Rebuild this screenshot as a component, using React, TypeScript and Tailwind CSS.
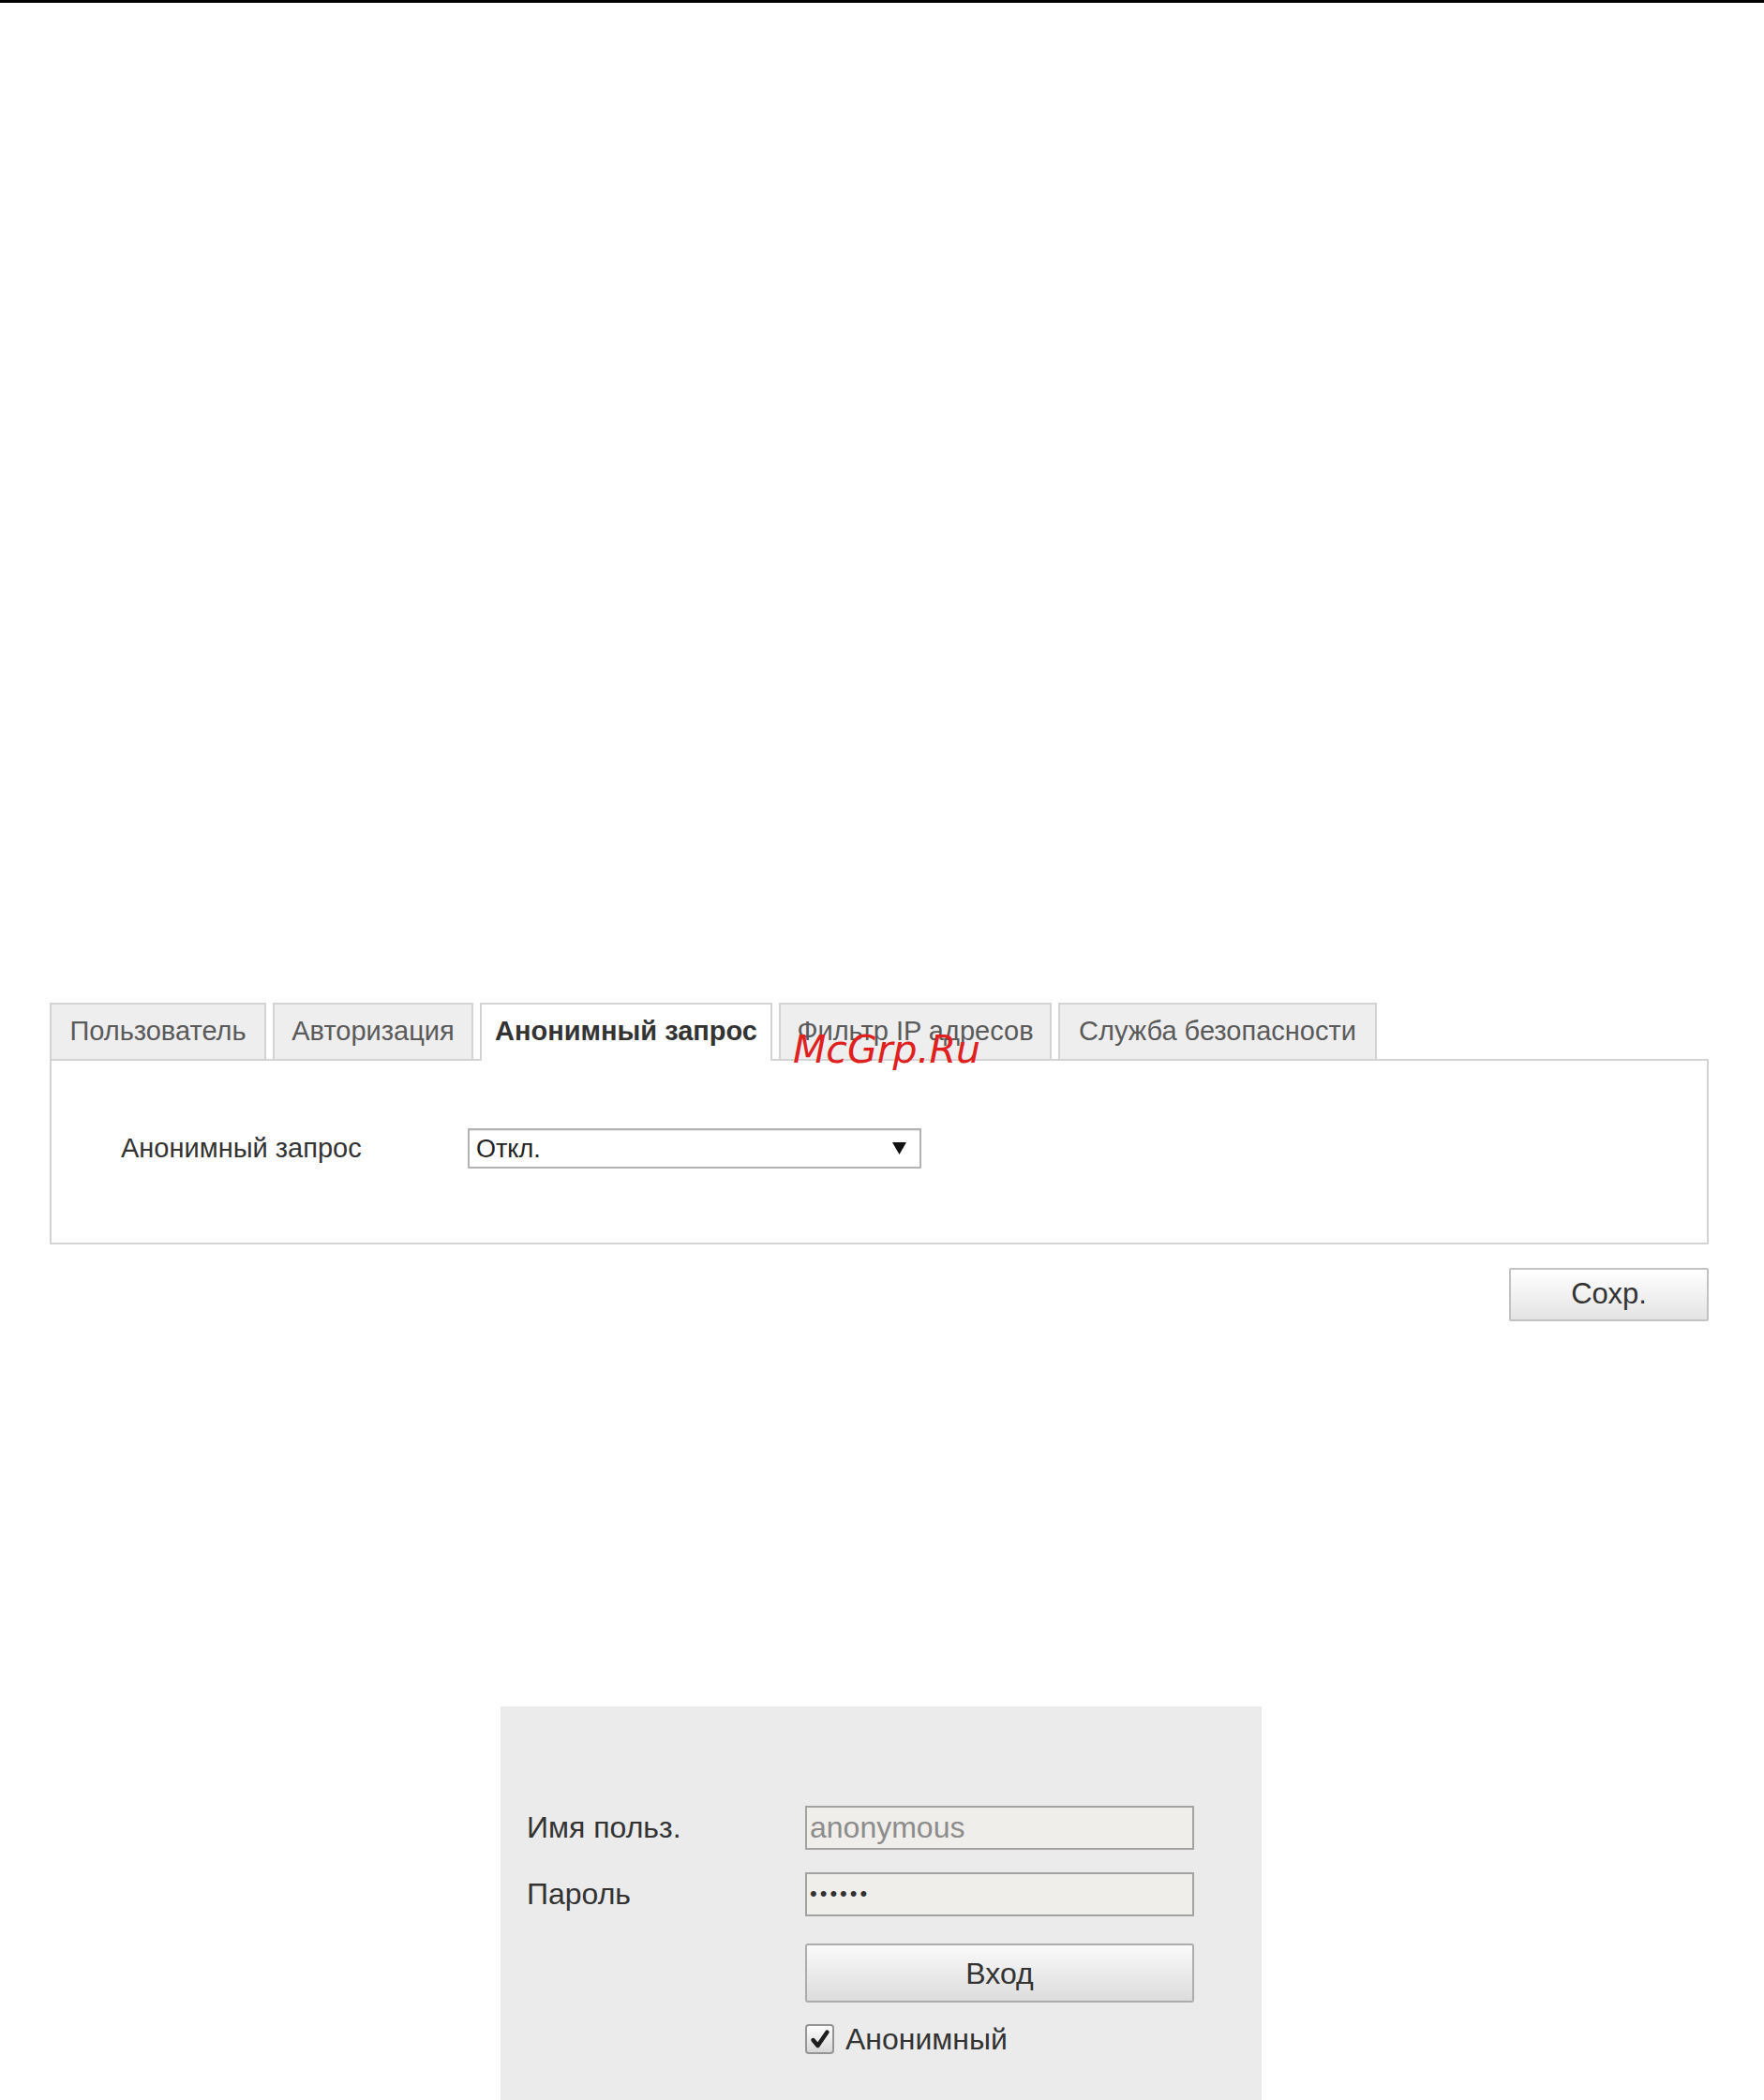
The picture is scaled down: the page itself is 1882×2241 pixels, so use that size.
const tabs = [
  { label: "Пользователь", width: "w-[231px]" },
  { label: "Авторизация", width: "w-[214px]" },
  { label: "Анонимный запрос", width: "w-[312px]", active: true },
  { label: "Фильтр IP адресов", width: "w-[291px]" },
  { label: "Служба безопасности", width: "w-[340px]" },
];

function Tabs() {
  return (
    <div className="relative z-10 -mb-[2px] flex items-start gap-[7px]">
      {tabs.map((tab) =>
        tab.active ? (
          <div
            key={tab.label}
            className={`${tab.width} flex h-[62px] items-center justify-center border-x-2 border-t-2 border-[#d3d3d3] bg-white pb-[2px] text-[29px] font-bold text-[#333]`}
          >
            {tab.label}
          </div>
        ) : (
          <div
            key={tab.label}
            className={`${tab.width} flex h-[62px] items-center justify-center border-2 border-[#d3d3d3] bg-[#eeeeee] text-[29px] text-[#5a5a5a]`}
          >
            {tab.label}
          </div>
        ),
      )}
    </div>
  );
}

function SelectBox() {
  return (
    <div className="flex h-[43px] w-[484px] items-center justify-between border-2 border-[#b4b4b4] bg-white pl-[7px] pr-[14px] shadow-[inset_0_1px_0_#e5e5e5]">
      <span className="text-[27px] text-[#222]">Откл.</span>
      <svg width="15" height="15" viewBox="0 0 15 15">
        <polygon points="0,1 15,1 7.5,14" fill="#111" />
      </svg>
    </div>
  );
}

function LoginBox() {
  return (
    <div className="ml-[534px] h-[420px] w-[812px] bg-[#ebebeb] pl-[28px] pt-[105px] text-[32px] text-[#333]">
      <div className="grid grid-cols-[297px_415px] items-center gap-y-[23px]">
        <span>Имя польз.</span>
        <div className="flex h-[47px] items-center border-2 border-[#a2a2a2] bg-[#efeeea] pl-[3px] text-[#8c8c8c]">
          anonymous
        </div>
        <span>Пароль</span>
        <div className="flex h-[47px] items-center border-2 border-[#a2a2a2] bg-[#efeeea] pl-[3px] text-[22px] leading-none tracking-[3px] text-[#333]">
          ••••••
        </div>
        <div />
        <button className="mt-[6px] flex h-[63px] items-center justify-center rounded-[3px] border-2 border-[#acacac] bg-gradient-to-b from-[#fafafa] to-[#dcdcdc] text-[32px] text-[#333]">
          Вход
        </button>
        <div />
        <div className="flex h-[32px] items-center gap-[12px] leading-[32px]">
          <div className="flex h-[32px] w-[31px] items-center justify-center rounded-[4px] border-2 border-[#959595] bg-gradient-to-b from-[#fdfdfd] to-[#d8d8d8]">
            <svg width="22" height="22" viewBox="0 0 22 22">
              <path
                d="M3.5 12 L8.5 18 L18.5 3.5"
                fill="none"
                stroke="#1e1e1e"
                strokeWidth="4.4"
                strokeLinecap="round"
                strokeLinejoin="round"
              />
            </svg>
          </div>
          <span>Анонимный</span>
        </div>
      </div>
    </div>
  );
}

export default function App() {
  return (
    <div className="min-h-[2241px] bg-white font-['Liberation_Sans',Arial,sans-serif]">
      <div className="h-[3px] bg-black" />

      <div className="relative ml-[53px] mr-[59px] pt-[1067px]">
        <Tabs />
        <div className="h-[198px] border-2 border-[#d3d3d3] bg-white pt-[72px]">
          <div className="flex items-center pl-[74px]">
            <span className="w-[370px] text-[29px] text-[#333]">Анонимный запрос</span>
            <SelectBox />
          </div>
        </div>
        <div className="mt-[25px] flex justify-end">
          <button className="h-[57px] w-[213px] rounded-[2px] border-2 border-[#c2c2c2] bg-gradient-to-b from-white to-[#e4e4e4] text-[31px] text-[#333]">
            Сохр.
          </button>
        </div>

        <span className="absolute left-[793px] top-[1087px] z-20 font-['DejaVu_Sans',sans-serif] text-[41px] italic text-[#e0201e]">
          McGrp.Ru
        </span>
      </div>

      <div className="mt-[411px]">
        <LoginBox />
      </div>
    </div>
  );
}
